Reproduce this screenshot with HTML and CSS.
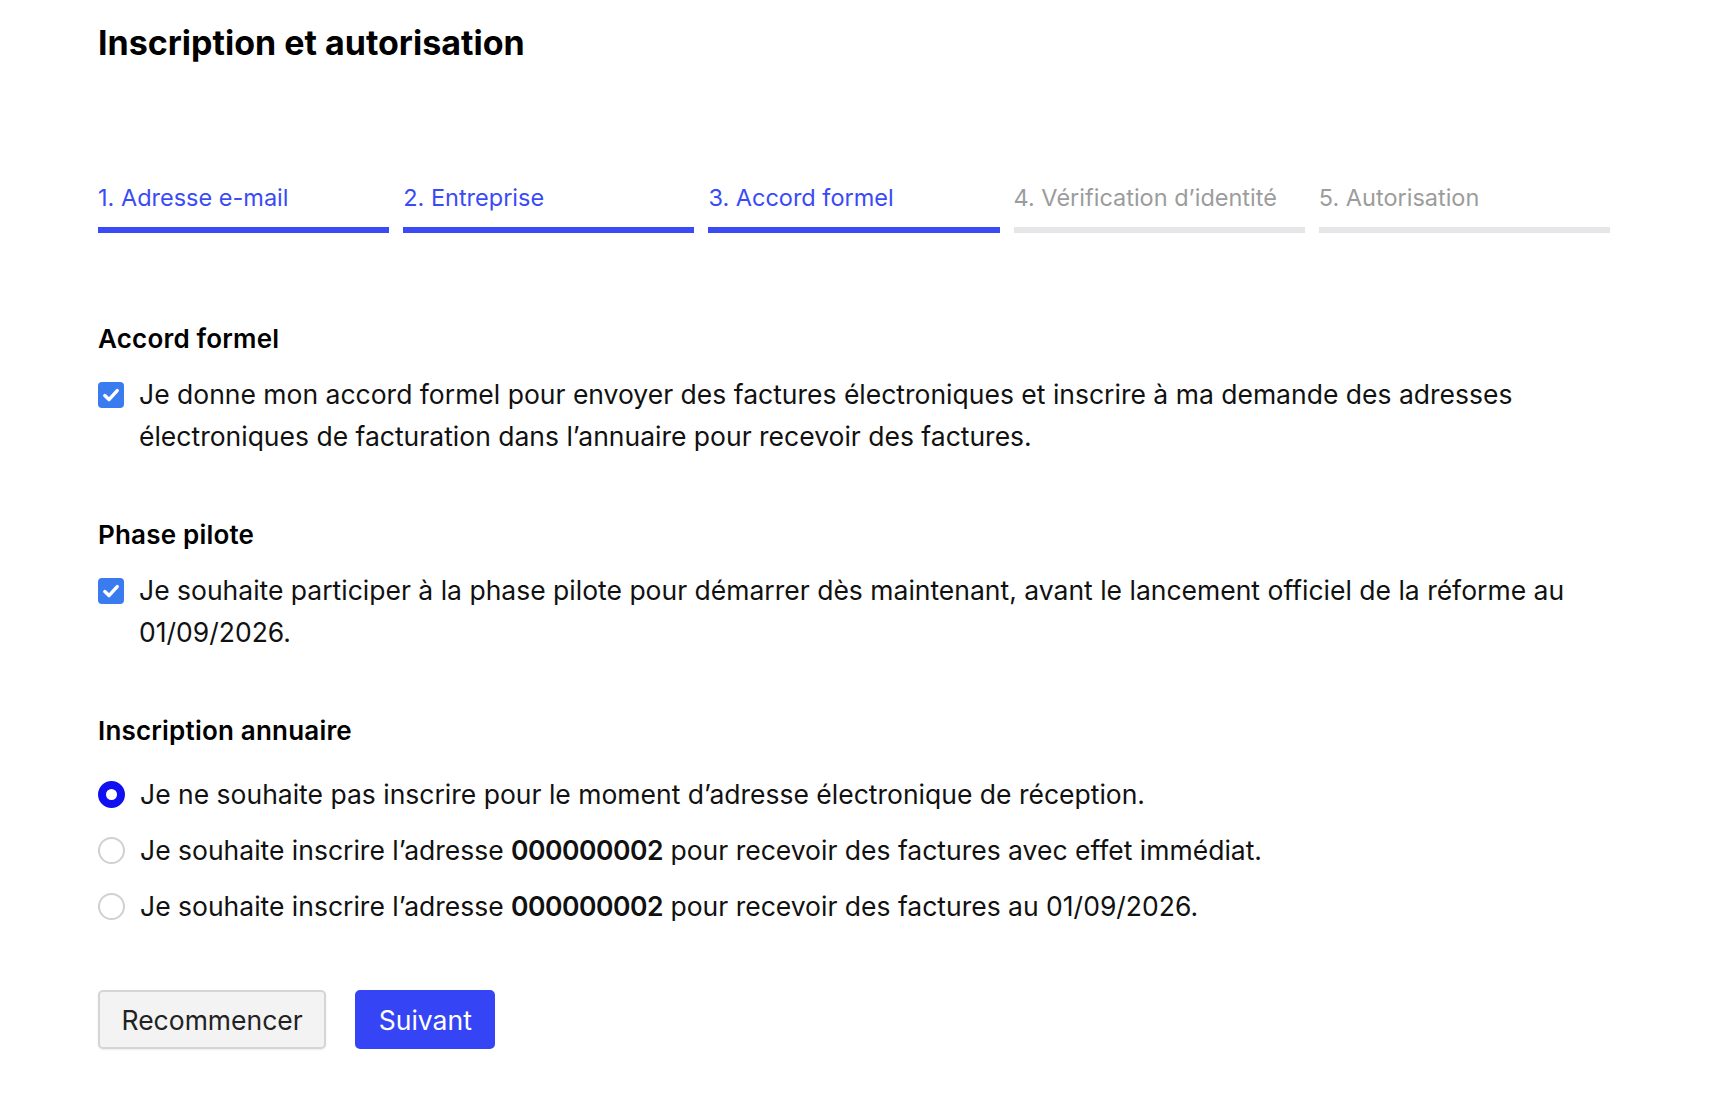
FILE: index.html
```html
<!DOCTYPE html>
<html lang="fr">
<head>
<meta charset="utf-8">
<title>Inscription et autorisation</title>
<link rel="stylesheet" href="styles.css">
</head>
<body>
<main class="page">
  <h1 class="title">Inscription et autorisation</h1>

  <ol class="steps">
    <li class="step is-active">1. Adresse e-mail</li>
    <li class="step is-active">2. Entreprise</li>
    <li class="step is-active">3. Accord formel</li>
    <li class="step">4. Vérification d’identité</li>
    <li class="step">5. Autorisation</li>
  </ol>

  <section class="block block-first">
    <h2 class="block-title">Accord formel</h2>
    <label class="option">
      <span class="checkbox"><svg viewBox="0 0 26 26" width="26" height="26"><path d="M6.8 13.6 L11 17.6 L19.2 8.6" fill="none" stroke="#fff" stroke-width="3.4" stroke-linecap="round" stroke-linejoin="round"/></svg></span>
      <span class="option-text">Je donne mon accord formel pour envoyer des factures électroniques et inscrire à ma demande des adresses électroniques de facturation dans l’annuaire pour recevoir des factures.</span>
    </label>
  </section>

  <section class="block">
    <h2 class="block-title">Phase pilote</h2>
    <label class="option">
      <span class="checkbox"><svg viewBox="0 0 26 26" width="26" height="26"><path d="M6.8 13.6 L11 17.6 L19.2 8.6" fill="none" stroke="#fff" stroke-width="3.4" stroke-linecap="round" stroke-linejoin="round"/></svg></span>
      <span class="option-text">Je souhaite participer à la phase pilote pour démarrer dès maintenant, avant le lancement officiel de la réforme au 01/09/2026.</span>
    </label>
  </section>

  <section class="block">
    <h2 class="block-title">Inscription annuaire</h2>
    <div class="radios">
      <label class="radio-row"><span class="radio is-checked"></span><span class="option-text">Je ne souhaite pas inscrire pour le moment d’adresse électronique de réception.</span></label>
      <label class="radio-row"><span class="radio"></span><span class="option-text">Je souhaite inscrire l’adresse <strong>000000002</strong> pour recevoir des factures avec effet immédiat.</span></label>
      <label class="radio-row"><span class="radio"></span><span class="option-text">Je souhaite inscrire l’adresse <strong>000000002</strong> pour recevoir des factures au 01/09/2026.</span></label>
    </div>
  </section>

  <div class="actions">
    <button class="btn btn-secondary" type="button">Recommencer</button>
    <button class="btn btn-primary" type="button">Suivant</button>
  </div>
</main>
</body>
</html>
```

FILE: styles.css
```css
html, body {
  margin: 0;
  background: #fff;
}

.page {
  width: 1512px;
  padding: 21px 0 40px 98px;
  font-family: Inter, "Noto Sans", sans-serif;
  color: #111;
}

.title {
  margin: 0;
  font-size: 34px;
  line-height: 44px;
  font-weight: 700;
  color: #000;
}

/* progress steps */
.steps {
  list-style: none;
  margin: 118px 0 0;
  padding: 0;
  display: grid;
  grid-template-columns: repeat(5, 1fr);
  gap: 14px;
}

.step {
  font-size: 23.5px;
  line-height: 30px;
  color: #9c9c9c;
  padding-bottom: 14px;
  border-bottom: 6px solid #e6e6e9;
}

.step.is-active {
  color: #3a4bf6;
  border-bottom-color: #3a4bf6;
}

/* form blocks */
.block {
  margin-top: 62px;
}

.block-first {
  margin-top: 90px;
}

.block-title {
  margin: 0 0 18px;
  font-size: 26px;
  line-height: 32px;
  font-weight: 600;
  letter-spacing: 0.2px;
  color: #000;
}

.option {
  display: flex;
  align-items: flex-start;
  gap: 15px;
  font-size: 26.5px;
  line-height: 42px;
}

.checkbox {
  flex: none;
  width: 26px;
  height: 26px;
  margin-top: 9px;
  border-radius: 4px;
  background: #3a7cf0;
  display: flex;
}

.option-text strong {
  font-weight: 600;
  letter-spacing: -0.5px;
}

.radios {
  padding-top: 8px;
  display: flex;
  flex-direction: column;
  gap: 14px;
}

.radio-row {
  display: flex;
  align-items: center;
  gap: 15px;
  font-size: 26.5px;
  line-height: 42px;
}

.radio {
  flex: none;
  box-sizing: border-box;
  width: 27px;
  height: 27px;
  border-radius: 50%;
  border: 2px solid #d0d0d0;
  background: #fff;
}

.radio.is-checked {
  border: 8px solid #1010f0;
}

/* buttons */
.actions {
  margin-top: 63px;
  display: flex;
  gap: 29px;
}

.btn {
  height: 59px;
  padding: 0 21.5px;
  border-radius: 5px;
  font-family: inherit;
  font-size: 26.5px;
  cursor: pointer;
}

.btn-secondary {
  background: #f3f3f3;
  color: #222;
  border: 2px solid #d5d5d5;
  box-shadow: 0 1px 2px rgba(0, 0, 0, 0.08);
}

.btn-primary {
  background: #3545f5;
  color: #fff;
  border: 2px solid #3545f5;
}
```
